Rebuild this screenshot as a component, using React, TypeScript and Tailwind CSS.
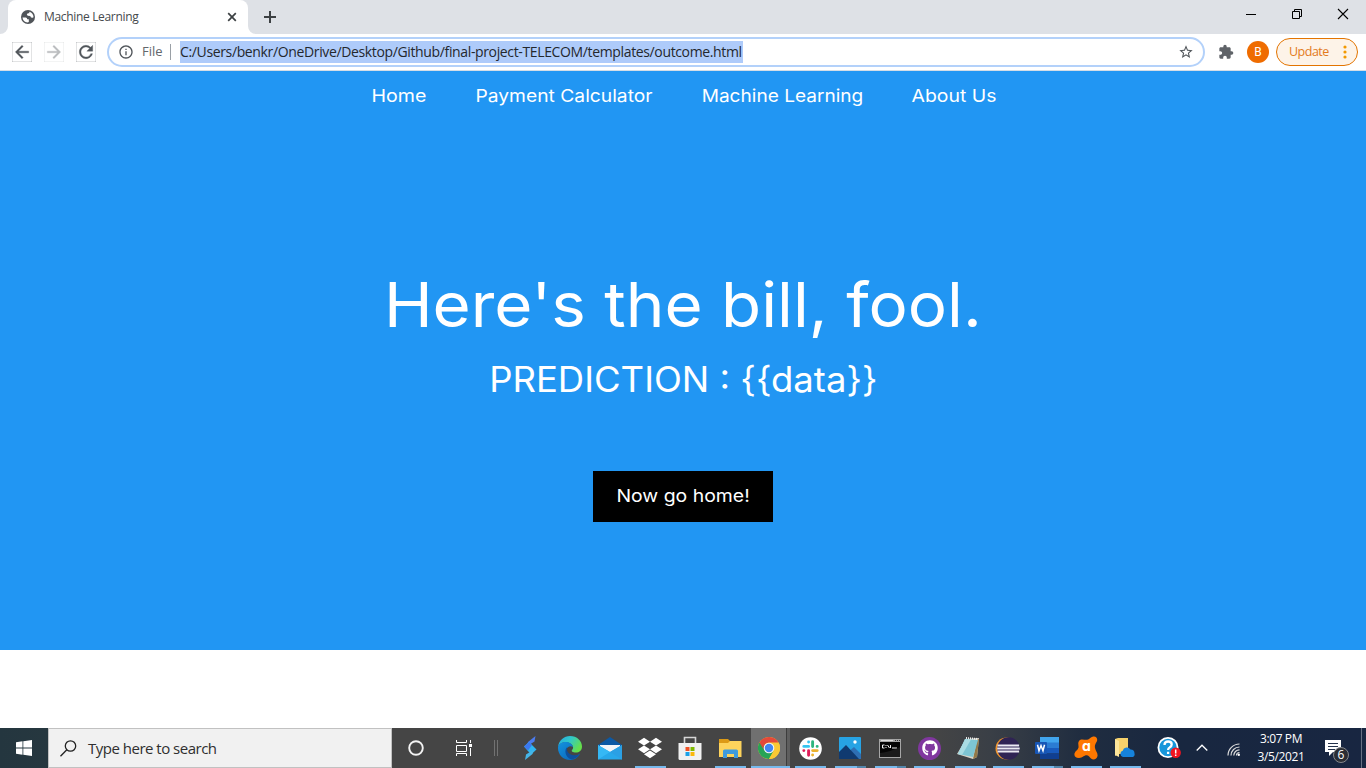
import type { ReactNode } from 'react';
import {
  MdArrowBack,
  MdArrowForward,
  MdRefresh,
  MdInfoOutline,
  MdStarBorder,
  MdExtension,
} from 'react-icons/md';
import { FaDropbox, FaGithub } from 'react-icons/fa';

function TabStrip() {
  return (
    <div className="flex h-[34px] bg-[#dee1e6] pl-2">
      <div className="relative flex h-[34px] w-[240px] items-center rounded-t-lg bg-white pl-[13px] pr-[9px]">
        <svg className="absolute -left-2 bottom-0" width="8" height="8">
          <path d="M8 0v8H0a8 8 0 0 0 8-8z" fill="#fff" />
        </svg>
        <svg className="absolute -right-2 bottom-0" width="8" height="8">
          <path d="M0 0v8h8a8 8 0 0 1-8-8z" fill="#fff" />
        </svg>
        <svg width="14" height="14" viewBox="0 0 14 14">
          <circle cx="7" cy="7" r="7" fill="#505459" />
          <path d="M1.500 7.500h3.200q1.500.3 1.500 1.800h1.600v2.600L6.500 12.600Q2 11.800 1.500 7.500z" fill="#fff" />
          <path d="M8.300 1.700Q12.300 3 12.500 7l-.5.800-2-.3-.8-1.500-2.500-.2-.9-1.300 1-1.300h1.500z" fill="#fff" />
        </svg>
        <span className="ml-[9px] flex-1 text-[12px] tracking-[-0.33px] text-[#45494d]">Machine Learning</span>
        <svg width="14" height="14" viewBox="0 0 14 14" stroke="#3c4043" strokeWidth="1.700">
          <path d="M3.200 3.200l7.600 7.600M10.800 3.200L3.200 10.800" />
        </svg>
      </div>
      <svg className="ml-[15px] mt-[10px]" width="14" height="14" stroke="#3c4043" strokeWidth="2">
        <path d="M7 1v12M1 7h12" />
      </svg>
      <div className="ml-auto flex">
        <svg className="h-[28px] w-[46px]" viewBox="0 0 46 28">
          <path d="M18 14.500h10" stroke="#000" />
        </svg>
        <svg className="h-[28px] w-[46px]" viewBox="0 0 46 28" fill="none" stroke="#000">
          <path d="M18.500 11.500h7v7h-7zM20.500 11.500v-2h7v7h-2" />
        </svg>
        <svg className="h-[28px] w-[46px]" viewBox="0 0 46 28" stroke="#000" strokeWidth="1.100">
          <path d="M18 9l10 10M28 9L18 19" />
        </svg>
      </div>
    </div>
  );
}

function Toolbar() {
  return (
    <div className="flex h-[37px] items-center border-b border-[#d5dde6] bg-white pl-[12px] pr-2">
      <MdArrowBack className="size-[20px] text-[#50555a]" strokeWidth="0.4" />
      <MdArrowForward className="ml-[12px] size-[20px] text-[#babcbe]" strokeWidth="0.4" />
      <MdRefresh className="ml-[12px] size-[20px] text-[#50555a]" strokeWidth="0.4" />
      <div className="ml-[11px] flex h-[30px] w-[1098px] items-center rounded-full border-2 border-[#b3d1fa] pl-[9px] pr-[9px] text-[14px]">
        <MdInfoOutline className="size-4 text-[#50555a]" />
        <span className="ml-2 w-[21px] text-[13px] text-[#63676c]">File</span>
        <span className="ml-[7px] h-4 w-px bg-[#9aa0a6]" />
        <span className="ml-[9px] h-[22px] w-[563px] whitespace-nowrap bg-[#aecbfa] text-[14px] leading-[22px] tracking-[-0.36px] text-[#24282d]">
          C:/Users/benkr/OneDrive/Desktop/Github/final-project-TELECOM/templates/outcome.html
        </span>
        <MdStarBorder className="ml-auto size-4 text-[#50555a]" />
      </div>
      <MdExtension className="ml-[13px] size-4 text-[#5f6368]" />
      <span className="ml-[13px] flex size-[22px] items-center justify-center rounded-full bg-[#ef6c00] font-[Roboto] text-[12px] text-white">
        B
      </span>
      <div className="ml-[7px] flex h-[28px] w-[82px] items-center rounded-full border border-[#e37400] bg-[#fdf3e8] pl-[12px] text-[12.500px] text-[#e37a1c]">
        <span className="w-[40px] tracking-[-0.5px]">Update</span>
        <svg className="ml-[10px]" width="12" height="14" fill="#f29900">
          <circle cx="6" cy="2" r="1.600" />
          <circle cx="6" cy="7" r="1.600" />
          <circle cx="6" cy="12" r="1.600" />
        </svg>
      </div>
    </div>
  );
}

function Page() {
  return (
    <main className="flex h-[657px] flex-col bg-white font-[Inter,sans-serif] text-white">
      <div className="flex h-[579px] flex-col items-center bg-[#2196f3]">
        <nav className="flex h-[50px] items-center justify-center text-center text-[17.500px]">
          <a className="w-[104px] scale-x-[1.12] whitespace-nowrap">Home</a>
          <a className="w-[226px] scale-x-[1.1] whitespace-nowrap">Payment Calculator</a>
          <a className="w-[211px] scale-x-[1.09] whitespace-nowrap">Machine Learning</a>
          <a className="w-[132px] scale-x-[1.11] whitespace-nowrap">About Us</a>
        </nav>
        <h1 className="mt-[136px] h-[96px] scale-x-[1.057] whitespace-nowrap text-[62px] leading-[96px]">
          Here's the bill, fool.
        </h1>
        <p className="-mt-[1px] h-[54px] scale-x-[1.042] whitespace-nowrap text-[35px] leading-[54px]">
          PREDICTION : {'{{data}}'}
        </p>
        <button className="mt-[65px] h-[51px] w-[180px] whitespace-nowrap bg-black text-[17.500px]">
          <span className="inline-block scale-x-[1.11]">Now go home!</span>
        </button>
      </div>
    </main>
  );
}

type CellProps = { w?: string; run?: 'none' | 'one' | 'many'; active?: boolean; children: ReactNode };

function Cell({ w = 'w-[40px]', run = 'none', active = false, children }: CellProps) {
  return (
    <div className={`relative flex h-full shrink-0 items-center justify-center ${w}`}>
      {active && (
        <div className="absolute inset-y-0 left-[1px] flex w-[39px]">
          <span className="w-[35px] bg-[#707070]" />
          <span className="w-px bg-[#3d3d3d]" />
          <span className="flex-1 bg-[#5e5e5e]" />
        </div>
      )}
      <div className="relative">{children}</div>
      {run !== 'none' && (
        <div className={`absolute bottom-0 flex h-[2px] ${active ? 'left-[1px] w-[39px]' : 'left-[5px] w-[31px]'}`}>
          <span className="flex-1 bg-[#76b9ed]" />
          {run === 'many' && <span className="w-[9px] bg-[#5486ab]" />}
        </div>
      )}
    </div>
  );
}

const Strike = () => (
  <svg className="block" width="24" height="24" viewBox="0 0 24 24">
    <path d="M17.500 0l-1 5.500-8 5 1.500-4.500z" fill="#4c7cf0" />
    <path d="M6 10.500l5-4.500 7.500 7.500-5.500 5z" fill="#2fb6f2" />
    <path d="M6 10.500l5-4.500 3 3-4 5.500z" fill="#3c78ee" />
    <path d="M7 24l1-5.500 8-5-1.500 4.500z" fill="#45b6e8" />
  </svg>
);

const Edge = () => (
  <svg className="block" width="24" height="24" viewBox="0 0 24 24">
    <defs>
      <linearGradient id="edgeTop" x1="0" y1="0" x2="1" y2=".5">
        <stop offset="0" stopColor="#26a9e5" />
        <stop offset=".5" stopColor="#31c8c9" />
        <stop offset="1" stopColor="#65df4b" />
      </linearGradient>
      <linearGradient id="edgeLow" x1="0" y1="0" x2="1" y2="1">
        <stop offset="0" stopColor="#1393df" />
        <stop offset="1" stopColor="#0b60b4" />
      </linearGradient>
    </defs>
    <path d="M0 11C1 4 6 0 12 0c7 0 12 5 12 10.500 0 4-3 6-6 6-3.500 0-5-1.500-4-2.500 1-1 1.200-2 1-3C14.500 8 11 6.200 7.500 6.200 4 6.200 1 8 0 11z" fill="url(#edgeTop)" />
    <path d="M0 12c0-4 4-6 7.500-6 4 0 7 2 7.500 5-2-1.500-6-1-6.500 3-.4 4 4 7 8.500 6 2-.4 4-1.500 5-2.500C20 22 16 24 12 24 5 24 0 18.500 0 12z" fill="url(#edgeLow)" />
    <path d="M10 10.500C5.500 13 7 21.500 13.500 23.500 17 23 20.500 20.500 22 18c-6 3-11.500.5-13-3.500-.3-1.500 0-3 1-4z" fill="#0e4f9c" />
  </svg>
);

const Mail = () => (
  <svg className="block" width="24" height="23" viewBox="0 0 24 23">
    <path d="M0 8l12-8 12 8v4H0z" fill="#0c59a4" />
    <path d="M2 8h20v7H2z" fill="#f3f5f8" />
    <path d="M0 8l12 7 12-7v14.500H0z" fill="#28a8ea" />
    <path d="M12 15L0 22.500V8z" fill="#35b8f5" />
    <path d="M24 22.500L12 15 24 8z" fill="#2ba0e4" />
  </svg>
);

const Store = () => (
  <svg className="block" width="24" height="25" viewBox="0 0 24 25">
    <path d="M6.500 8V1.500h11V8" fill="none" stroke="#d6d6d6" strokeWidth="1.600" />
    <path d="M.5 7h23v15.500q0 1.500-1.500 1.500H2q-1.500 0-1.500-1.500z" fill="#f1f1f1" />
    <path d="M7.500 11h4v4h-4z" fill="#f05125" />
    <path d="M12.500 11h4v4h-4z" fill="#7eb900" />
    <path d="M7.500 16h4v4h-4z" fill="#1ba1e8" />
    <path d="M12.500 16h4v4h-4z" fill="#fbb80a" />
  </svg>
);

const Explorer = () => (
  <svg className="block" width="23" height="19" viewBox="0 0 23 19">
    <path d="M0 0h9l2 2h11v4H0z" fill="#dc9a16" />
    <path d="M0 4h9l2-2h11.500v16H0z" fill="#fdd35c" />
    <path d="M4 19v-7q0-1.500 1.500-1.500h12Q19 10.500 19 12v7h-4v-4H8v4z" fill="#3f9bdc" />
  </svg>
);

const Chrome = () => (
  <svg className="block" width="22" height="22" viewBox="0 0 24 24">
    <circle cx="12" cy="12" r="12" fill="#fbc934" />
    <path d="M12 12L1.600 6A12 12 0 0 0 12 24l5.200-9z" fill="#27a456" />
    <path d="M12 6H22.400A12 12 0 0 1 12 24l5.200-9z" fill="#fbc934" />
    <path d="M1.600 6A12 12 0 0 1 22.400 6H12a6 6 0 0 0-5.200 9z" fill="#e4493a" />
    <circle cx="12" cy="12" r="5.800" fill="#f4f6f8" />
    <circle cx="12" cy="12" r="4.600" fill="#4387f2" />
  </svg>
);

const Slack = () => (
  <svg className="block" width="23" height="23" viewBox="0 0 24 24" strokeWidth="3" strokeLinecap="round">
    <circle cx="12" cy="12" r="11.800" fill="#fff" />
    <path d="M10 5.200v.1M5 9.800h5" stroke="#36c5f0" />
    <path d="M14.200 5v5M19 9.800h-.1" stroke="#2eb67d" />
    <path d="M14.200 14.200h4.800M14.200 18.900v-.1" stroke="#ecb22e" />
    <path d="M10 14.200v4.800M5 14.200h.1" stroke="#e01e5a" />
  </svg>
);

const Photos = () => (
  <svg className="block" width="22" height="22" viewBox="0 0 22 22">
    <rect width="22" height="22" rx="1" fill="#27a3e4" />
    <path d="M8 16l7-6 7 7v5H0v-1z" fill="#2e6fb4" />
    <path d="M0 15l7-7 13 14H0z" fill="#103a70" />
    <circle cx="16" cy="5" r="1.700" fill="#fff" />
  </svg>
);

const Cmd = () => (
  <svg className="block" width="22" height="19" viewBox="0 0 22 19">
    <rect width="22" height="19" fill="#a6a6a6" />
    <path d="M1 3h20v15H1z" fill="#050505" />
    <path d="M2 1.500h12" stroke="#dedede" />
    <path d="M16 1.500h1m1 0h1m1 0h1" stroke="#333" />
    <path d="M5.500 6H3.500v3h2M7 6v1m0 1v1M8.500 6l2 3M11.500 6v3M13 9h5" stroke="#f2f2f2" fill="none" />
    <path d="M1 14q10-1 20-6v10H1z" fill="#282828" opacity=".6" />
  </svg>
);

const Notepad = () => (
  <svg className="block" width="23" height="22" viewBox="0 0 23 22">
    <path d="M0 17L9 2l13-1-2 19-4 2z" fill="#d9d5c9" />
    <path d="M20 3l2-1-2 18-4 2z" fill="#927848" />
    <path d="M8 2l13 1-5 17L1 17z" fill="#7dc5d3" />
    <path d="M8 2l6 .5L5 18l-4-1z" fill="#a9dce3" />
    <path d="M9 1l12 1" stroke="#eee" strokeWidth="2" strokeDasharray="1 1" />
  </svg>
);

const Eclipse = () => (
  <svg className="block" width="25" height="23" viewBox="0 0 25 23">
    <circle cx="11.500" cy="11.500" r="11" fill="#f1952b" />
    <circle cx="13.500" cy="11.500" r="11.200" fill="#2f2354" />
    <path d="M2.500 8.500h21.600M2.200 11.500h22.500M2.500 14.500h21.600" stroke="#eceaf3" strokeWidth="1.800" />
  </svg>
);

const Word = () => (
  <svg className="block" width="24" height="22" viewBox="0 0 24 22">
    <path d="M5 0h19v6H5z" fill="#41a5ee" />
    <path d="M5 5.500h19V11H5z" fill="#2b7cd3" />
    <path d="M5 11h19v5.500H5z" fill="#185abd" />
    <path d="M5 16.500h19V22H5z" fill="#103f91" />
    <rect y="5" width="12" height="12" rx="1" fill="#1756b6" />
    <path d="M2.500 7.800l1.500 6L6 8.500l2 5.300 1.500-6" fill="none" stroke="#fff" strokeWidth="1.500" />
  </svg>
);

const Avast = () => (
  <div className="relative flex size-6 items-center justify-center">
    <svg className="absolute inset-0" width="24" height="24" viewBox="0 0 24 24">
      <path d="M5 5C7 2 11 4.500 14 3.500 16 3 17 .5 20 .5c3 0 4 3 2.500 5.500-1 2-2 3-1.500 6 .6 3 3 5 2.500 8-.6 3-4 4.500-6.500 2.500-1.500-1.300-2-3-4-3.200-3-.3-4 2.500-8 2.700C1.500 22 0 20 .5 17.500 1.200 15 4 14 4.500 11.500 4.800 9 3.500 7.500 5 5z" fill="#ff7800" />
    </svg>
    <span className="relative left-px -mt-[4px] font-[Inter] text-[14px] font-bold leading-none text-white">ɑ</span>
  </div>
);

const CloudFolder = () => (
  <svg className="block" width="20" height="20" viewBox="0 0 20 20">
    <path d="M0 1l3-1h10v16H3l-3 2z" fill="#f6d26c" />
    <path d="M0 1l4 2v16l-4-2z" fill="#fce59b" />
    <path d="M8 19a3.200 3.200 0 0 1-.3-6.200A4.300 4.300 0 0 1 15.500 11.500 4 4 0 0 1 19.500 15.500 3 3 0 0 1 18 19z" fill="#1683dc" />
  </svg>
);

const Help = () => (
  <svg className="block" width="24" height="22" viewBox="0 0 24 22">
    <circle cx="11" cy="10.500" r="9.600" fill="#1696da" stroke="#fff" strokeWidth="1.800" />
    <path d="M7.500 8q0-3.500 3.600-3.500 3.600 0 3.600 3 0 1.800-2.100 3-1.500.7-1.500 2.500M11.100 14.800v2.300" fill="none" stroke="#fff" strokeWidth="2.300" />
    <circle cx="18.700" cy="15.800" r="5.200" fill="#f01420" />
    <path d="M18.700 12.500v4M18.700 17.600v1.500" stroke="#fff" strokeWidth="1.500" />
  </svg>
);

function Taskbar() {
  return (
    <div className="flex h-10 bg-[linear-gradient(90deg,#24363f_0,#26373f_48px,#454545_60px,#454545_930px,#3a3f46_990px,#202d40_1080px,#182740_1180px,#182641_1366px)]">
      <div className="flex w-12 items-center justify-center">
        <svg width="16" height="16" viewBox="0 0 16 16" fill="#fff">
          <path d="M0 2.200L6.500 1.300v6.200H0zM7.300 1.200L16 0v7.500H7.300zM0 8.400h6.500v6.300L0 13.800zM7.300 8.400H16V16l-8.700-1.200z" />
        </svg>
      </div>
      <div className="flex w-[344px] items-center border border-[#c1c1c1] bg-[#f1f1f1] pl-[11px] text-[15px] text-[#2f2f2f]">
        <svg width="17" height="17" viewBox="0 0 17 17" fill="none" stroke="#222" strokeWidth="1.300">
          <circle cx="10.500" cy="6" r="5.200" />
          <path d="M6.800 9.700L.5 16.300" />
        </svg>
        <span className="ml-[11px] tracking-[-0.5px]">Type here to search</span>
      </div>
      <Cell w="w-[48px]">
        <svg className="block" width="16" height="16">
          <circle cx="8" cy="8" r="6.800" fill="none" stroke="#f3f3f3" strokeWidth="1.900" />
        </svg>
      </Cell>
      <Cell w="w-[48px]">
        <svg className="block" width="16" height="16" fill="none" stroke="#fff">
          <path d="M.5 0v2.500h10V0M.5 5.500h10v6H.5zM.5 16v-2.500h10V16M14.500 0v3M14.500 8v8" />
          <path d="M13 4h3v3h-3z" fill="#fff" stroke="none" />
        </svg>
      </Cell>
      <div className="flex w-[22px] items-center gap-[2px] pl-[6px]">
        <span className="h-4 w-px bg-[#727272]" />
        <span className="h-4 w-px bg-[#727272]" />
      </div>
      <Cell><Strike /></Cell>
      <Cell><Edge /></Cell>
      <Cell><Mail /></Cell>
      <Cell run="one"><FaDropbox className="size-[24px] text-white" /></Cell>
      <Cell><Store /></Cell>
      <Cell run="one"><Explorer /></Cell>
      <Cell run="one" active><div className="mr-[2px]"><Chrome /></div></Cell>
      <Cell run="one"><Slack /></Cell>
      <Cell run="many"><Photos /></Cell>
      <Cell w="w-[39px]" run="many"><Cmd /></Cell>
      <Cell w="w-[41px]" run="one">
        <div className="flex size-[23px] items-center justify-center rounded-full bg-[#80379f]">
          <FaGithub className="size-[16px] text-white" />
        </div>
      </Cell>
      <Cell w="w-[38px]" run="one"><div className="mr-[2px]"><Notepad /></div></Cell>
      <Cell w="w-[39px]" run="one"><Eclipse /></Cell>
      <Cell w="w-[39px]" run="many"><Word /></Cell>
      <Cell w="w-[39px]" run="one"><Avast /></Cell>
      <Cell w="w-[39px]" run="one"><CloudFolder /></Cell>
      <Cell w="w-[50px]"><Help /></Cell>
      <Cell w="w-[16px]">
        <svg className="block" width="12" height="8" fill="none" stroke="#fff" strokeWidth="1.300">
          <path d="M.7 6.500L6 1.200l5.300 5.300" />
        </svg>
      </Cell>
      <Cell w="w-[47px]">
        <svg className="mt-[2px] block" width="13" height="13" viewBox="0 0 13 13" fill="none" stroke="#ddd" strokeWidth="1.200">
          <path d="M9.500 12.500A3 3 0 0 1 12.500 9.500M6.800 12.500A5.700 5.700 0 0 1 12.500 6.800M4 12.500A8.500 8.500 0 0 1 12.500 4M1 12.500A11.500 11.500 0 0 1 12.500 1" />
          <circle cx="11.800" cy="11.800" r="1.200" fill="#fff" stroke="none" />
        </svg>
      </Cell>
      <div className="flex w-[48px] flex-col items-center justify-center text-[12px] leading-[18px] tracking-[-0.4px] text-white">
        <span className="whitespace-nowrap">3:07 PM</span>
        <span className="whitespace-nowrap">3/5/2021</span>
      </div>
      <div className="relative ml-auto flex w-[41px] items-center">
        <svg className="ml-[5px]" width="17" height="17" viewBox="0 0 17 17">
          <path d="M0 0h16v12H8l-4 4v-4H0z" fill="#fff" />
          <path d="M3 3.500h10M3 6.500h10M3 9.500h7" stroke="#25334c" />
        </svg>
        <span className="absolute left-[13px] top-[19px] flex size-[16px] items-center justify-center rounded-full border border-[#85888d] bg-[#2b2e34] text-[12px] leading-none text-white">
          6
        </span>
      </div>
      <span className="mr-[4px] w-px bg-[#677083]" />
    </div>
  );
}

export default function App() {
  return (
    <div className="flex h-[768px] w-[1366px] flex-col overflow-hidden bg-white font-['Open_Sans',sans-serif]">
      <TabStrip />
      <Toolbar />
      <Page />
      <Taskbar />
    </div>
  );
}
